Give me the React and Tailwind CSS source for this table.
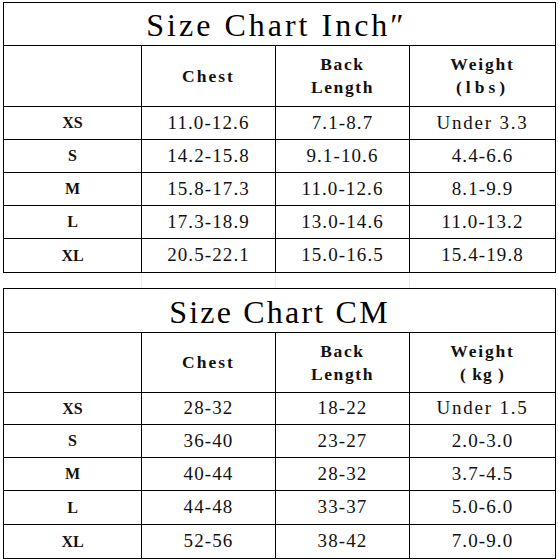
const inchRows = [
  ["XS", "11.0-12.6", "7.1-8.7", "Under 3.3"],
  ["S", "14.2-15.8", "9.1-10.6", "4.4-6.6"],
  ["M", "15.8-17.3", "11.0-12.6", "8.1-9.9"],
  ["L", "17.3-18.9", "13.0-14.6", "11.0-13.2"],
  ["XL", "20.5-22.1", "15.0-16.5", "15.4-19.8"],
];

const cmRows = [
  ["XS", "28-32", "18-22", "Under 1.5"],
  ["S", "36-40", "23-27", "2.0-3.0"],
  ["M", "40-44", "28-32", "3.7-4.5"],
  ["L", "44-48", "33-37", "5.0-6.0"],
  ["XL", "52-56", "38-42", "7.0-9.0"],
];

const cols = "grid grid-cols-[138px_134px_134px_146px]";
const cell = "flex items-center justify-center border-r border-b border-black";

function SizeTable({ title, titleClass, titleH, headerH, unit, unitClass, rows, rowHeights }) {
  return (
    <div className="ml-[3px] w-[553px] border-l border-t border-black">
      <div
        className={`flex items-center justify-center border-r border-b border-black pt-[2px] text-[32px] text-black ${titleClass}`}
        style={{ height: titleH }}
      >
        {title}
      </div>
      <div className={cols} style={{ height: headerH }}>
        <div className={cell}></div>
        <div className={`${cell} text-[17.5px] font-bold tracking-[2px]`}>Chest</div>
        <div className={`${cell} flex-col text-[17.5px] font-bold leading-[23px] tracking-[1.6px]`}>
          <span>Back</span>
          <span>Length</span>
        </div>
        <div className={`${cell} flex-col text-[17.5px] font-bold leading-[23px] tracking-[1.8px]`}>
          <span>Weight</span>
          <span className={unitClass}>{unit}</span>
        </div>
      </div>
      {rows.map((r, i) => (
        <div key={r[0]} className={cols} style={{ height: rowHeights[i] }}>
          <div className={`${cell} text-[16px] font-bold`}>{r[0]}</div>
          <div className={`${cell} text-[19px] tracking-[1.1px]`}>{r[1]}</div>
          <div className={`${cell} text-[19px] tracking-[1.1px]`}>{r[2]}</div>
          <div className={`${cell} text-[19px] ${r[3].startsWith("Under") ? "tracking-[1.8px]" : "tracking-[1.1px]"}`}>
            {r[3]}
          </div>
        </div>
      ))}
    </div>
  );
}

export default function App() {
  return (
    <div
      className="h-[560px] w-[558px] overflow-hidden bg-white pt-[2px] text-[#111]"
      style={{ fontFamily: '"Liberation Serif", "Times New Roman", serif' }}
    >
      <SizeTable
        title="Size Chart Inch″"
        titleClass="tracking-[3px] pr-[6px]"
        titleH={43}
        headerH={61}
        unit="(lbs)"
        unitClass="tracking-[4px]"
        rows={inchRows}
        rowHeights={[33, 33, 33, 33, 34]}
      />
      <div className="ml-[3px] grid h-[15px] w-[553px] grid-cols-[139px_134px_134px_146px]">
        <div className="border-r border-[#ececec]"></div>
        <div className="border-r border-[#ececec]"></div>
        <div className="border-r border-[#ececec]"></div>
        <div></div>
      </div>
      <SizeTable
        title="Size Chart CM"
        titleClass="tracking-[2.2px]"
        titleH={44}
        headerH={60}
        unit="( kg )"
        unitClass="tracking-[1px]"
        rows={cmRows}
        rowHeights={[32, 33, 33, 34, 34]}
      />
    </div>
  );
}
